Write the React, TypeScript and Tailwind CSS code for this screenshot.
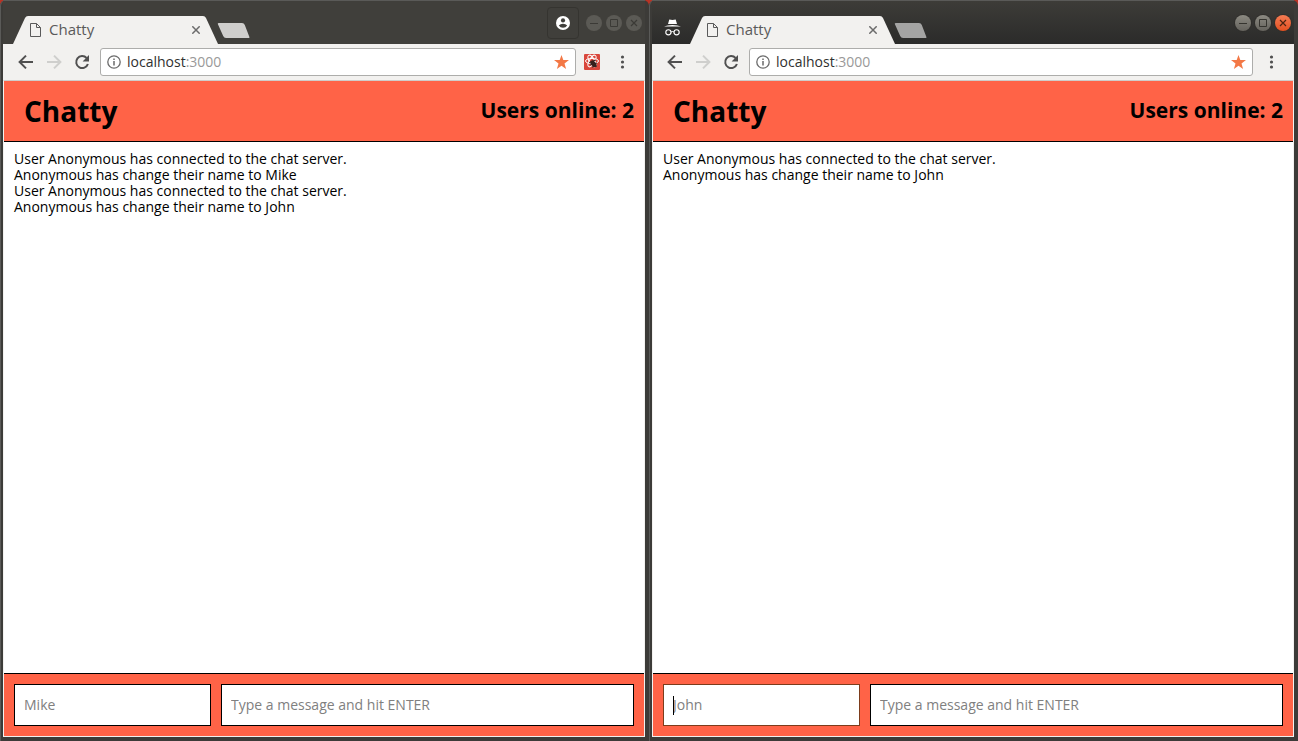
import { useState } from "react";

type WindowProps = {
  incognito?: boolean;
  users: number;
  name: string;
  log: string[];
};

const controlFocused = "flex size-4 items-center justify-center rounded-full bg-linear-to-b from-[#8c8a82] to-[#65635d] text-[#35342f] ring-1 ring-[#302f2c]";
const controlIdle = "flex size-4 items-center justify-center rounded-full bg-[#5b5a55] text-[#3b3a36]";
const closeFocused = "flex size-4 items-center justify-center rounded-full bg-linear-to-b from-[#f57b52] to-[#e2501f] text-[#4a2412] ring-1 ring-[#302f2c]";

function Tab() {
  return (
    <div className="relative h-7 w-[206px] text-[#5a5a5a]">
      <svg className="absolute inset-0 size-full" viewBox="0 0 206 28" preserveAspectRatio="none" aria-hidden="true">
        <path d="M0 28 L12 2 Q13 0 15 0 H190 Q192 0 193 2 L205 28 Z" fill="#f2f1ef" />
      </svg>
      <div className="relative flex h-full items-center pr-3 pl-[17px]">
        <svg width="11" height="14" viewBox="0 0 11 14" fill="none" stroke="#5a5a5a" aria-hidden="true">
          <path d="M.5.5H6.5L10.5 4.5V13.5H.5Z M6.5.5V4.5H10.5" />
        </svg>
        <span className="ml-2 flex-1 pb-[2px] text-[15px] leading-5">Chatty</span>
        <button type="button" aria-label="Close tab" className="mr-[3px] flex size-4 items-center justify-center">
          <svg width="8" height="8" viewBox="0 0 8 8" stroke="#6b6b6b" strokeWidth="1.5" aria-hidden="true">
            <path d="M.3.3L7.7 7.7M7.7.3L.3 7.7" />
          </svg>
        </button>
      </div>
    </div>
  );
}

function WindowControls({ active }: { active: boolean }) {
  return (
    <div className="flex gap-1">
      <button type="button" aria-label="Minimize" className={active ? controlFocused : controlIdle}>
        <svg width="16" height="16" viewBox="0 0 16 16" stroke="currentColor" aria-hidden="true"><path d="M4 8.5H12" /></svg>
      </button>
      <button type="button" aria-label="Maximize" className={active ? controlFocused : controlIdle}>
        <svg width="16" height="16" viewBox="0 0 16 16" fill="none" stroke="currentColor" aria-hidden="true"><path d="M4.5 4.5H11.5V11.5H4.5Z" /></svg>
      </button>
      <button type="button" aria-label="Close" className={active ? closeFocused : controlIdle}>
        <svg width="16" height="16" viewBox="0 0 16 16" stroke="currentColor" strokeWidth="1.2" aria-hidden="true"><path d="M5 5L11 11M11 5L5 11" /></svg>
      </button>
    </div>
  );
}

function TitleBar({ incognito = false }: { incognito?: boolean }) {
  return (
    <div className={incognito ? "flex h-11 items-end border-t border-[#5a5a58] bg-linear-to-b from-[#3d3c38] to-[#2b2b2a]" : "flex h-11 items-end border-t border-[#5a5a58] bg-[#403f3b]"}>
      {incognito ? (
        <svg className="mr-[9px] mb-2 ml-3" width="17" height="17" viewBox="0 0 17 17" aria-hidden="true">
          <path d="M5.3.4 8.5 1 11.7.4 13 5H4Z" fill="#fff" />
          <path d="M0 7.5Q3 6 8.5 6T17 7.5Z" fill="#fff" />
          <path d="M7 13Q8.5 12 10 13" fill="none" stroke="#fff" />
          <circle cx="4.4" cy="13.3" r="2.6" fill="none" stroke="#fff" strokeWidth="1.1" />
          <circle cx="12.6" cy="13.3" r="2.6" fill="none" stroke="#fff" strokeWidth="1.1" />
        </svg>
      ) : (
        <div className="w-[10px]" />
      )}
      <Tab />
      <button type="button" aria-label="New tab" className="mb-[6px] -ml-[2px]">
        <svg width="33" height="15" viewBox="0 0 33 15" aria-hidden="true">
          <path d="M2 0H25Q27 0 27.8 2L32.4 14Q33 15 31.5 15H9Q7 15 6.2 13L.8 1Q.4 0 2 0Z" fill={incognito ? "#a4a4a3" : "#cfcecc"} />
        </svg>
      </button>
      <div className="ml-auto flex h-full items-center gap-[7px] pr-[3px]">
        {!incognito && (
          <button type="button" aria-label="Profile" className="flex size-8 items-center justify-center rounded-sm border border-[#353430]">
            <svg width="14" height="14" viewBox="0 0 14 14" aria-hidden="true">
              <circle cx="7" cy="7" r="7" fill="#fff" />
              <circle cx="7" cy="4.4" r="2.1" fill="#403f3b" />
              <path d="M2.8 9.5Q4.3 7.7 7 7.7T11.2 9.5Q9.8 11.8 7 11.8T2.8 9.5Z" fill="#403f3b" />
            </svg>
          </button>
        )}
        <WindowControls active={incognito} />
      </div>
    </div>
  );
}

function Toolbar({ extension }: { extension: boolean }) {
  return (
    <div className="flex h-9 items-center bg-[#f2f1ef] pr-5 pl-[15px]">
      <div className="flex w-[82px] shrink-0 gap-3">
        <button type="button" aria-label="Back">
          <svg width="16" height="16" viewBox="0 0 16 16" fill="none" stroke="#505050" strokeWidth="2" aria-hidden="true"><path d="M15 8H2M8 1.6 1.6 8 8 14.4" /></svg>
        </button>
        <button type="button" aria-label="Forward" disabled>
          <svg width="16" height="16" viewBox="0 0 16 16" fill="none" stroke="#cfcfcd" strokeWidth="2" aria-hidden="true"><path d="M1 8H14M8 1.6 14.4 8 8 14.4" /></svg>
        </button>
        <button type="button" aria-label="Reload">
          <svg width="16" height="16" viewBox="0 0 16 16" aria-hidden="true">
            <path d="M12.6 4A6 6 0 1 0 13.9 10" fill="none" stroke="#505050" strokeWidth="2" />
            <path d="M15 1V7.4H8.6Z" fill="#505050" />
          </svg>
        </button>
      </div>
      <div className="flex h-7 flex-1 items-center rounded-[3px] border border-[#adadab] bg-white px-[6px]">
        <svg width="14" height="14" viewBox="0 0 14 14" fill="none" stroke="#6b6b6b" aria-hidden="true">
          <circle cx="7" cy="7" r="6.2" strokeWidth="1.3" />
          <path d="M7 6V10.5M7 3.5V5" strokeWidth="1.5" />
        </svg>
        <a href="http://localhost:3000" className="ml-[6px] flex-1 text-sm text-[#303030]">
          localhost<span className="text-[#999]">:3000</span>
        </a>
        <button type="button" aria-label="Bookmark">
          <svg width="15" height="14" viewBox="0 0 15 14" aria-hidden="true">
            <path d="M7.5 0 9.3 5H15L10.5 8.4 12.1 14 7.5 10.7 2.9 14 4.5 8.4 0 5H5.7Z" fill="#f37846" />
          </svg>
        </button>
      </div>
      {extension && (
        <button type="button" aria-label="React developer tools" className="ml-2">
          <svg width="16" height="16" viewBox="0 0 16 16" aria-hidden="true">
            <rect width="16" height="16" rx="1" fill="#d9463b" />
            <g fill="none" stroke="#fff" strokeWidth="1">
              <ellipse cx="8" cy="7" rx="6.5" ry="2.6" />
              <ellipse cx="8" cy="7" rx="6.5" ry="2.6" transform="rotate(60 8 7)" />
              <ellipse cx="8" cy="7" rx="6.5" ry="2.6" transform="rotate(120 8 7)" />
            </g>
            <ellipse cx="9.4" cy="9.8" rx="3.8" ry="2.4" transform="rotate(50 9.4 9.8)" fill="#35201d" />
            <path d="M5 8.5 12 6M6 11 13 9M8 13 13 12" stroke="#35201d" />
          </svg>
        </button>
      )}
      <button type="button" aria-label="Menu" className={extension ? "ml-5" : "ml-4"}>
        <svg width="5" height="14" viewBox="0 0 5 14" fill="#505050" aria-hidden="true">
          <circle cx="2.5" cy="2" r="1.6" /><circle cx="2.5" cy="7" r="1.6" /><circle cx="2.5" cy="12" r="1.6" />
        </svg>
      </button>
    </div>
  );
}

function BrowserWindow({ incognito = false, users, name, log }: WindowProps) {
  const [nickname, setNickname] = useState("");
  const [message, setMessage] = useState("");
  return (
    <section className="flex min-w-0 flex-1 flex-col rounded-t-md bg-[#3c3b38] pr-[4px] pb-1 pl-[3px] shadow-[inset_1px_0_0_#5a5a58]">
      <TitleBar incognito={incognito} />
      <Toolbar extension={!incognito} />
      <div className="flex flex-1 flex-col border border-[#f2f1ef] border-t-[#cfcdca] bg-white text-black">
        <header className="flex h-[61px] items-center justify-between border-b border-black bg-[#ff6347] pr-[10px] pl-5 font-bold">
          <h1 className="text-[28px]">Chatty</h1>
          <p className="text-[21px]">Users online: {users}</p>
        </header>
        <main className="flex-1 px-[10px] py-[9px] text-sm leading-4">
          {log.map((line, index) => (
            <p key={index}>{line}</p>
          ))}
        </main>
        <footer className="flex gap-[10px] border-t border-black bg-[#ff6347] p-[10px] text-sm">
          <div className="relative">
            <input
              aria-label="Name"
              value={nickname}
              onChange={(event) => setNickname(event.target.value)}
              placeholder={name}
              autoFocus={incognito}
              className="peer block h-[42px] w-[197px] border border-black bg-white px-[9px] pb-[2px] placeholder-[#808080] outline-none placeholder-shown:caret-transparent focus:border-[#7c3c1c]"
            />
            <span className="pointer-events-none absolute top-3 left-[10px] hidden h-[19px] w-px bg-black peer-placeholder-shown:peer-focus:block" />
          </div>
          <input
            aria-label="Message"
            value={message}
            onChange={(event) => setMessage(event.target.value)}
            placeholder="Type a message and hit ENTER"
            className="h-[42px] min-w-0 flex-1 border border-black bg-white px-[9px] pb-[2px] placeholder-[#808080] outline-none"
          />
        </footer>
      </div>
    </section>
  );
}

export default function App() {
  return (
    <div className="flex min-h-screen bg-[#b83325] font-['Open_Sans','Noto_Sans',sans-serif]">
      <BrowserWindow
        users={2}
        name="Mike"
        log={[
          "User Anonymous has connected to the chat server.",
          "Anonymous has change their name to Mike",
          "User Anonymous has connected to the chat server.",
          "Anonymous has change their name to John",
        ]}
      />
      <BrowserWindow
        incognito
        users={2}
        name="John"
        log={[
          "User Anonymous has connected to the chat server.",
          "Anonymous has change their name to John",
        ]}
      />
    </div>
  );
}
